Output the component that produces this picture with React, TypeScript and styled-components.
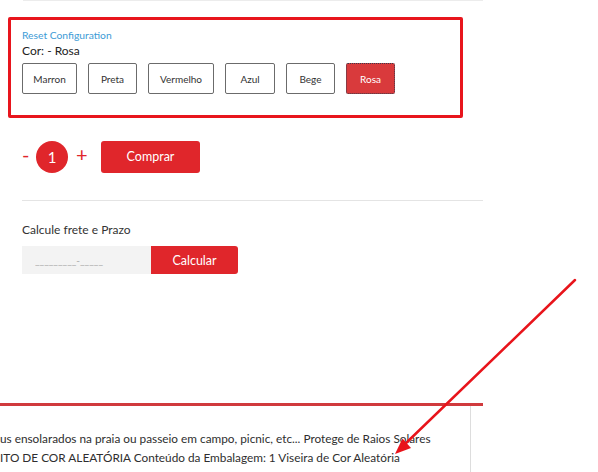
import styled, { createGlobalStyle } from "styled-components";

const GlobalStyle = createGlobalStyle`
  html, body {
    margin: 0;
    padding: 0;
    background: #ffffff;
  }
  body {
    font-family: Lato, "Open Sans", sans-serif;
    color: #333333;
  }
`;

const colours = [
  { name: "Marron", width: 55 },
  { name: "Preta", width: 49 },
  { name: "Vermelho", width: 66 },
  { name: "Azul", width: 50 },
  { name: "Bege", width: 49 },
  { name: "Rosa", width: 49 },
];
const selected = "Rosa";

function App() {
  return (
    <Page>
      <GlobalStyle />
      <TopRule />
      <ConfigBox>
        <ResetLink>Reset Configuration</ResetLink>
        <ColourLabel>Cor: - {selected}</ColourLabel>
        <ColourRow>
          {colours.map((c) => (
            <ColourButton
              key={c.name}
              $active={c.name === selected}
              style={{ width: c.width }}
            >
              {c.name}
            </ColourButton>
          ))}
        </ColourRow>
      </ConfigBox>

      <BuyRow>
        <QtySign>-</QtySign>
        <QtyBubble>1</QtyBubble>
        <QtySign $plus>+</QtySign>
        <BuyButton>Comprar</BuyButton>
      </BuyRow>

      <Divider />

      <ShippingTitle>Calcule frete e Prazo</ShippingTitle>
      <ShippingRow>
        <CepInput placeholder="_________-_____" />
        <CalcButton>Calcular</CalcButton>
      </ShippingRow>

      <DescriptionPanel>
        <DescriptionBody>
          <DescLine>
            us ensolarados na praia ou passeio em campo, picnic, etc... Protege
            de Raios Solares
          </DescLine>
          <DescLine>
            ITO DE COR ALEATÓRIA Conteúdo da Embalagem: 1 Viseira de Cor
            Aleatória
          </DescLine>
        </DescriptionBody>
      </DescriptionPanel>

      <Arrow viewBox="0 0 598 472" width="598" height="472">
        <line
          x1="575"
          y1="280"
          x2="404"
          y2="445"
          stroke="#e8141b"
          strokeWidth="2.5"
          strokeLinecap="round"
        />
        <polygon points="395,454 411,448 402.5,438.5" fill="#e8141b" />
      </Arrow>
    </Page>
  );
}

export default App;

const Page = styled.div`
  position: relative;
  width: 598px;
  height: 472px;
  overflow: hidden;
  display: flex;
  flex-direction: column;
`;

const TopRule = styled.div`
  margin-left: 23px;
  width: 460px;
  height: 1px;
  background: #ececec;
`;

const ConfigBox = styled.div`
  margin: 16px 0 0 8px;
  width: 455px;
  box-sizing: border-box;
  border: 3px solid #e8151d;
  border-radius: 2px;
  padding: 9px 12px 21px 11px;
  display: flex;
  flex-direction: column;
`;

const ResetLink = styled.a`
  font-size: 10.3px;
  line-height: 12px;
  color: #3d9bd6;
  cursor: pointer;
`;

const ColourLabel = styled.div`
  margin-top: 2px;
  font-size: 12px;
  line-height: 15px;
  color: #222222;
`;

const ColourRow = styled.div`
  margin-top: 5px;
  display: flex;
  gap: 11px;
`;

const ColourButton = styled.button<{ $active?: boolean }>`
  height: 31px;
  padding: 0;
  box-sizing: border-box;
  font-family: Lato, sans-serif;
  font-size: 10px;
  color: ${(p) => (p.$active ? "#ffffff" : "#333333")};
  background: ${(p) => (p.$active ? "#d93a3c" : "#ffffff")};
  border: 1px ${(p) => (p.$active ? "dotted #3a3a4a" : "solid #6b6b6b")};
  border-radius: 2px;
`;

const BuyRow = styled.div`
  margin: 22px 0 0 22px;
  display: flex;
  align-items: center;
  height: 33px;
`;

const QtySign = styled.span<{ $plus?: boolean }>`
  color: #e0262b;
  font-size: 20px;
  font-weight: 400;
  width: ${(p) => (p.$plus ? "11px" : "7px")};
  margin: ${(p) => (p.$plus ? "-5px 14px 0 8px" : "-6px 7px 0 0")};
  line-height: 1;
`;

const QtyBubble = styled.div`
  width: 32px;
  height: 32px;
  border-radius: 50%;
  background: #e0262b;
  color: #ffffff;
  font-size: 15px;
  display: flex;
  align-items: center;
  justify-content: center;
`;

const BuyButton = styled.button`
  width: 99px;
  height: 32px;
  border: none;
  border-radius: 3px;
  background: #e0262b;
  color: #ffffff;
  font-family: Lato, sans-serif;
  font-size: 12.5px;
`;

const Divider = styled.div`
  margin: 27px 0 0 22px;
  width: 461px;
  height: 1px;
  background: #e4e4e4;
`;

const ShippingTitle = styled.div`
  margin: 21px 0 0 22px;
  font-size: 12px;
  line-height: 15px;
  color: #333333;
`;

const ShippingRow = styled.div`
  margin: 9px 0 0 22px;
  display: flex;
  height: 28px;
`;

const CepInput = styled.input`
  width: 129px;
  box-sizing: border-box;
  border: none;
  background: #f3f3f3;
  padding: 0 0 0 13px;
  font-family: Lato, sans-serif;
  font-size: 10px;
  outline: none;
  &::placeholder {
    color: #a8a8a8;
  }
`;

const CalcButton = styled.button`
  width: 87px;
  border: none;
  border-radius: 0 3px 3px 0;
  background: #e0262b;
  color: #ffffff;
  font-family: Lato, sans-serif;
  font-size: 12.5px;
`;

const DescriptionPanel = styled.div`
  margin-top: 129px;
  width: 483px;
  border-top: 3px solid #d03a3d;
  flex: 1;
`;

const DescriptionBody = styled.div`
  width: 471px;
  height: 100%;
  box-sizing: border-box;
  border-right: 1px solid #dddddd;
  padding-top: 23px;
  overflow: hidden;
`;

const DescLine = styled.div`
  white-space: nowrap;
  font-size: 11.8px;
  line-height: 19px;
  color: #2e2e2e;
`;

const Arrow = styled.svg`
  position: absolute;
  top: 0;
  left: 0;
  pointer-events: none;
`;
